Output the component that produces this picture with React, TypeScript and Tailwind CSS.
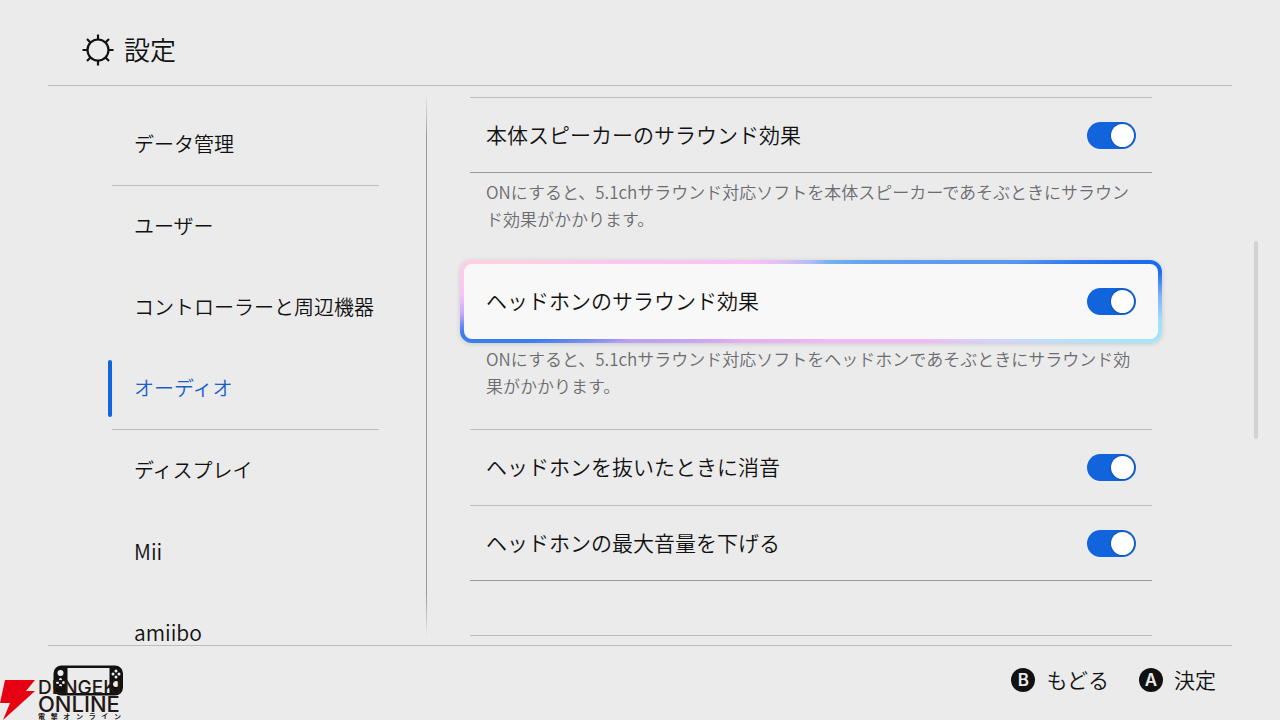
import { useState } from 'react';

const MENU = [
  { label: 'データ管理', divider: true },
  { label: 'ユーザー' },
  { label: 'コントローラーと周辺機器' },
  { label: 'オーディオ', divider: true },
  { label: 'ディスプレイ' },
  { label: 'Mii', latin: true },
  { label: 'amiibo', latin: true },
];

interface SwitchRowProps {
  id: string;
  label: string;
  className?: string;
}

function SwitchRow({ id, label, className = 'h-[74px]' }: SwitchRowProps) {
  const [on, setOn] = useState(true);
  return (
    <div className={`flex items-center justify-between px-4 ${className}`}>
      <label htmlFor={id} className="pb-[3px] text-[21px] leading-8">
        {label}
      </label>
      <span className="relative flex h-[27px] w-[49px] shrink-0">
        <input
          id={id}
          type="checkbox"
          role="switch"
          checked={on}
          onChange={() => setOn(!on)}
          className="peer h-full w-full cursor-pointer appearance-none rounded-full bg-[#a5a5a5] checked:bg-[#1164dc]"
        />
        <span className="pointer-events-none absolute top-0.5 left-0.5 size-[23px] rounded-full bg-white shadow-[0_0_2px_rgba(0,0,0,0.5)] peer-checked:right-0.5 peer-checked:left-auto" />
      </span>
    </div>
  );
}

function GearIcon() {
  return (
    <svg className="size-8" viewBox="0 0 32 32" fill="none" stroke="currentColor" strokeWidth="2.200">
      <circle cx="16" cy="16" r="10.500" />
      <path d="M16 6V0.500M16 26v5.500M6 16H0.500M26 16h5.500M9 9L5 5M23 9l4-4M9 23l-4 4M23 23l4 4" />
    </svg>
  );
}

function ConsoleIcon() {
  return (
    <svg className="absolute top-5 left-[53px] h-[31px] w-[71px]" viewBox="0 0 71 31">
      <path
        fill="#111"
        fillRule="evenodd"
        d="M8 0.500h54a8 8 0 0 1 8 8v14a8 8 0 0 1-8 8H8.500a8 8 0 0 1-8-8V8.500a8 8 0 0 1 8-8zM14.500 3v25h42V3z"
      />
      <circle cx="7.500" cy="8" r="3" fill="#eee" />
      <circle cx="63" cy="19" r="3" fill="#eee" />
      <g fill="#eee">
        <circle cx="7.500" cy="14.500" r="1.500" />
        <circle cx="7.500" cy="20.500" r="1.500" />
        <circle cx="4.500" cy="17.500" r="1.500" />
        <circle cx="10.500" cy="17.500" r="1.500" />
        <circle cx="63" cy="6" r="1.500" />
        <circle cx="63" cy="12" r="1.500" />
        <circle cx="60" cy="9" r="1.500" />
        <circle cx="66" cy="9" r="1.500" />
      </g>
    </svg>
  );
}

function Watermark() {
  return (
    <div className="absolute bottom-0 left-0 flex h-10 items-start gap-0.5 text-[#231815]">
      <svg className="h-10 w-9" viewBox="0 0 36 40">
        <path fill="#e60012" d="M5 0h30l-9 11h9L3 40l7-17H0z" />
      </svg>
      <div className="flex w-[83px] flex-col whitespace-nowrap">
        <span className="font-['Inter'] text-[19px] leading-4 font-medium">DENGEKI</span>
        <span className="font-['Inter'] text-[22px] leading-[17px] font-medium">ONLINE</span>
        <span className="flex justify-between text-[7px] leading-[7px] font-bold">
          {[...'電撃オンライン'].map((char, i) => (
            <span key={i}>{char}</span>
          ))}
        </span>
      </div>
    </div>
  );
}

function KeyHint({ button, label }: { button: string; label: string }) {
  return (
    <button type="button" className="flex items-center gap-[11px] text-[21px] leading-8">
      <span className="flex size-6 items-center justify-center rounded-full bg-[#111] font-['Inter'] text-[17px] font-semibold text-[#ebebeb]">
        {button}
      </span>
      <span className="pb-[3px]">{label}</span>
    </button>
  );
}

export default function App() {
  const [active, setActive] = useState('オーディオ');

  return (
    <div className="flex h-screen flex-col overflow-hidden bg-[#ebebeb] font-['Noto_Sans_CJK_JP',sans-serif] font-[350] text-[#111]">
      <header className="mx-12 flex h-[86px] shrink-0 items-center gap-2.5 border-b border-[#bdbdbd] px-[34px] pt-3.5">
        <GearIcon />
        <h1 className="pb-0.5 text-[26px] leading-9">設定</h1>
      </header>

      <div className="flex min-h-0 flex-1 pl-12">
        <nav className="w-[378px] shrink-0 overflow-hidden pt-[18px] pr-[47px] pl-[60px]">
          <ul>
            {MENU.map((item) => (
              <li key={item.label}>
                <button
                  type="button"
                  onClick={() => setActive(item.label)}
                  className={`flex h-[81px] w-full items-center text-left leading-7 whitespace-nowrap ${
                    item.latin ? 'text-[21px]' : 'text-[20px]'
                  } ${active === item.label ? 'text-[#1a5fc8]' : ''}`}
                >
                  <span
                    className={`mr-[22px] h-[57px] w-1 shrink-0 rounded-xs ${
                      active === item.label ? 'bg-[#1164dc]' : ''
                    }`}
                  />
                  <span className="pb-0.5">{item.label}</span>
                </button>
                {item.divider && <div className="ml-1 h-px bg-[#bdbdbd]" />}
              </li>
            ))}
          </ul>
        </nav>

        <div className="my-2 w-px shrink-0 bg-[linear-gradient(to_bottom,transparent,#999_8%,#999_92%,transparent)]" />

        <main className="min-w-0 flex-1 overflow-hidden px-[33px] pt-[11px]">
          <div className="mx-[10px]">
            <div className="border-t border-b border-t-[#bdbdbd] border-b-[#999]">
              <SwitchRow id="speaker" label="本体スピーカーのサラウンド効果" />
            </div>
            <p className="px-4 pt-[5px] text-[17px] leading-[27px] whitespace-nowrap text-[#6b6b70]">
              ONにすると、5.1chサラウンド対応ソフトを本体スピーカーであそぶときにサラウン
              <br />
              ド効果がかかります。
            </p>
          </div>

          <div className="mt-7 rounded-xl bg-[conic-gradient(#b0bcf8_0deg,#74b4f0_24deg,#5a98f0_79deg,#1c6cf0_83deg,#1c6cf0_85deg,#7eb0fb_89deg,#a0e0fb_93deg,#a5e6fb_97deg,#cfd8fc_101deg,#f3b8f5_109deg,#f5b8f8_155deg,#e6b0f3_240deg,#b9a0f0_258deg,#3b7eec_262deg,#3b7eec_265deg,#c8a8fb_268deg,#fbc0fb_271deg,#ffd0e0_277deg,#fcc4f0_282deg,#f8c0f6_305deg,#b0bcf8_360deg)] p-1 shadow-[0_1px_5px_rgba(0,0,0,0.15)]">
            <div className="rounded-lg bg-[#f8f8f8] px-1.5">
              <SwitchRow id="headphone" label="ヘッドホンのサラウンド効果" className="h-[75px]" />
            </div>
          </div>

          <div className="mx-[10px]">
            <p className="px-4 pt-0.5 text-[17px] leading-[27px] whitespace-nowrap text-[#6b6b70]">
              ONにすると、5.1chサラウンド対応ソフトをヘッドホンであそぶときにサラウンド効
              <br />
              果がかかります。
            </p>
            <div className="mt-[30px] border-t border-[#bdbdbd]">
              <SwitchRow id="mute" label="ヘッドホンを抜いたときに消音" className="h-[75px]" />
            </div>
            <div className="border-t border-b border-t-[#bdbdbd] border-b-[#999]">
              <SwitchRow id="volume" label="ヘッドホンの最大音量を下げる" />
            </div>
            <div className="mt-[54px] border-t border-[#bdbdbd]" />
          </div>
        </main>

        <div className="mr-[22px] ml-[59px] flex w-1 shrink-0 flex-col pt-[155px]">
          <div className="h-[198px] rounded-full bg-[#d2d2d2]" />
        </div>
      </div>

      <footer className="relative h-[75px] shrink-0 px-12">
        <div className="flex h-full items-center justify-end gap-[30px] border-t border-[#bdbdbd] pr-4 pb-1.5">
          <KeyHint button="B" label="もどる" />
          <KeyHint button="A" label="決定" />
        </div>
        <ConsoleIcon />
        <Watermark />
      </footer>
    </div>
  );
}
